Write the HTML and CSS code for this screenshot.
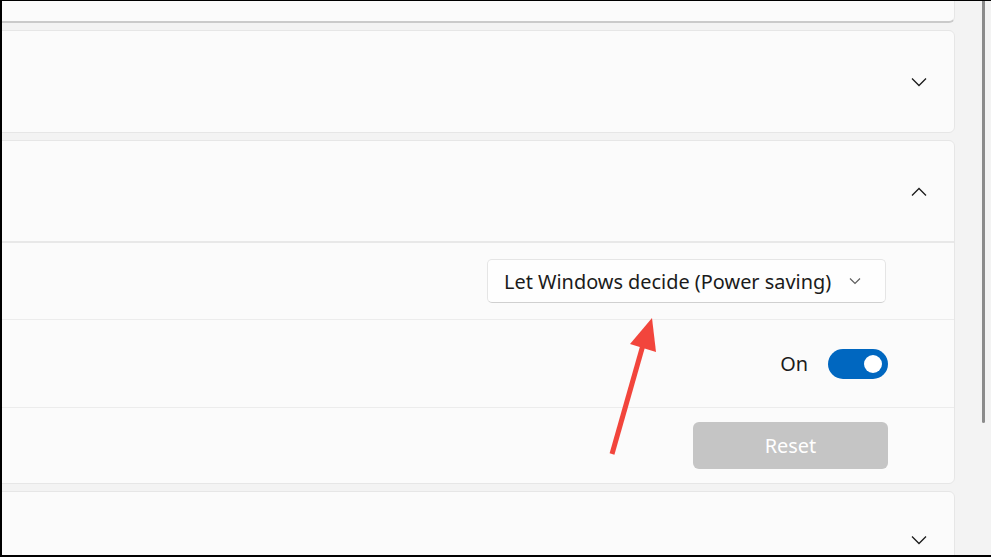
FILE: index.html
```html
<!DOCTYPE html>
<html>
<head>
<meta charset="utf-8">
<link rel="stylesheet" href="styles.css">
</head>
<body>
<div class="frame">
  <div class="content">
    <div class="card card-top"></div>
    <div class="card card-collapsed">
      <svg class="chev" width="16" height="10" viewBox="0 0 16 10"><path d="M1 1.5 L8 8.5 L15 1.5" fill="none" stroke="#1b1b1b" stroke-width="1.3"/></svg>
    </div>
    <div class="card card-expanded">
      <div class="exp-head">
        <svg class="chev" width="16" height="10" viewBox="0 0 16 10"><path d="M1 8.5 L8 1.5 L15 8.5" fill="none" stroke="#1b1b1b" stroke-width="1.3"/></svg>
      </div>
      <div class="row row-1">
        <div class="select">
          <span class="select-text">Let Windows decide (Power saving)</span>
          <svg width="12" height="8" viewBox="0 0 12 8"><path d="M1 1.5 L6 6.5 L11 1.5" fill="none" stroke="#5d5d5d" stroke-width="1.2"/></svg>
        </div>
      </div>
      <div class="row row-2">
        <span class="toggle-label">On</span>
        <div class="toggle"><div class="knob"></div></div>
      </div>
      <div class="row row-3">
        <div class="btn-reset">Reset</div>
      </div>
    </div>
    <div class="card card-bottom">
      <svg class="chev" width="16" height="10" viewBox="0 0 16 10"><path d="M1 1.5 L8 8.5 L15 1.5" fill="none" stroke="#1b1b1b" stroke-width="1.3"/></svg>
    </div>
  </div>
  <div class="scrollbar"><div class="thumb"></div></div>
  <svg class="arrow" width="991" height="557" viewBox="0 0 991 557">
    <line x1="612" y1="454" x2="643" y2="345" stroke="#f2453c" stroke-width="5" stroke-linecap="butt"/>
    <polygon points="652,318 630,344 656,352" fill="#f2453c"/>
  </svg>
</div>
</body>
</html>
```

FILE: styles.css
```css
html, body {
  margin: 0;
  padding: 0;
  background: #000;
}
body {
  font-family: "Noto Sans", "Open Sans", sans-serif;
  color: #1b1b1b;
}
.frame {
  position: relative;
  width: 991px;
  height: 557px;
  box-sizing: border-box;
  border-top: 1px solid #000;
  border-left: 2px solid #000;
  border-bottom: 2px solid #000;
  background: #f3f3f3;
  display: flex;
  overflow: hidden;
}
.content {
  width: 953px;
  flex: none;
  display: flex;
  flex-direction: column;
  gap: 7px;
  overflow: hidden;
}
.card {
  margin-left: -20px;
  background: #fbfbfb;
  border: 1px solid #e6e6e6;
  border-radius: 6px;
  flex: none;
  box-sizing: border-box;
  position: relative;
}
.card-top {
  margin-top: -40px;
  height: 62px;
  border-bottom: 2px solid #cacaca;
}
.card-collapsed {
  height: 103px;
  display: flex;
  align-items: center;
  justify-content: flex-end;
  padding-right: 27px;
}
.chev {
  display: block;
}
.card-expanded {
  height: 344px;
  display: flex;
  flex-direction: column;
}
.exp-head {
  height: 102px;
  flex: none;
  display: flex;
  align-items: center;
  justify-content: flex-end;
  padding-right: 27px;
  border-bottom: 2px solid #e8e8e8;
  box-sizing: border-box;
  padding-top: 1px;
}
.row {
  display: flex;
  align-items: center;
  justify-content: flex-end;
  padding-right: 66px;
  box-sizing: border-box;
  flex: none;
}
.row-1 {
  height: 77px;
  border-bottom: 1px solid #ececec;
}
.row-2 {
  height: 88px;
  border-bottom: 1px solid #ececec;
  gap: 20px;
}
.row-3 {
  height: 74px;
}
.select {
  width: 399px;
  height: 44px;
  box-sizing: border-box;
  background: #fefefe;
  border: 1px solid #e5e5e5;
  border-bottom-color: #d0d0d0;
  border-radius: 5px;
  display: flex;
  align-items: center;
  justify-content: space-between;
  padding: 0 24px 0 16px;
  margin-right: 2px;
}
.select-text {
  font-size: 19.9px;
  color: #1b1b1b;
  white-space: nowrap;
}
.toggle-label {
  font-size: 19.9px;
  color: #1b1b1b;
}
.toggle {
  width: 60px;
  height: 30px;
  border-radius: 15px;
  background: #0067c0;
  position: relative;
}
.knob {
  position: absolute;
  width: 18px;
  height: 18px;
  border-radius: 50%;
  background: #fff;
  right: 6px;
  top: 6px;
}
.btn-reset {
  width: 195px;
  height: 47px;
  border-radius: 6px;
  background: #c5c5c5;
  color: #fff;
  font-size: 19.9px;
  display: flex;
  align-items: center;
  justify-content: center;
  margin-top: 1px;
}
.card-bottom {
  height: 100px;
  display: flex;
  align-items: flex-start;
  justify-content: flex-end;
  padding-right: 27px;
  padding-top: 43px;
}
.scrollbar {
  flex: 1;
  position: relative;
  background: #f3f3f3;
}
.thumb {
  position: absolute;
  left: 27px;
  top: -4px;
  width: 3px;
  height: 426px;
  border-radius: 2px;
  background: #8b8b8b;
}
.arrow {
  position: absolute;
  left: -2px;
  top: -1px;
  pointer-events: none;
}
```
